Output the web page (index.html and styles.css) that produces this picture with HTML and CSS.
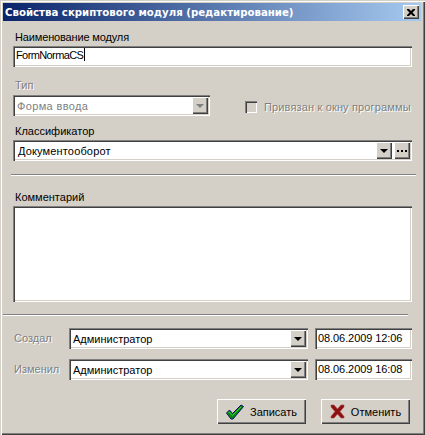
FILE: index.html
```html
<!DOCTYPE html>
<html lang="ru">
<head>
    <meta charset="UTF-8">
    <link rel="stylesheet" href="styles.css">
    <title>Свойства скриптового модуля</title>
</head>
<body>
    <div class="window">
        <div class="titlebar">
            <span class="title">Свойства скриптового модуля (редактирование)</span>
            <div class="close raised">
                <svg width="8" height="7" viewBox="0 0 8 7"><path d="M0 0h2l2 2 2-2h2v1L5.500 3.500 8 6v1H6L4 5 2 7H0V6l2.500-2.500L0 1z" fill="#000"/></svg>
            </div>
        </div>

        <div class="label label-name">Наименование модуля</div>
        <div class="field field-name">FormNormaCS<span class="caret"></span></div>

        <div class="label label-type disabled">Тип</div>
        <div class="type-row">
            <div class="field combo combo-type">
                <span class="value">Форма ввода</span>
                <div class="arrow raised"><i class="tri tri-off"></i></div>
            </div>
            <div class="bind">
                <span class="check"></span>
                <span class="bind-text disabled">Привязан к окну программы</span>
            </div>
        </div>

        <div class="label label-class">Классификатор</div>
        <div class="field combo combo-class">
            <span class="value">Документооборот</span>
            <div class="arrow raised"><i class="tri"></i></div>
            <div class="arrow dots raised"><i></i><i></i><i></i></div>
        </div>

        <div class="sep sep-top"></div>

        <div class="label label-comment">Комментарий</div>
        <div class="field memo"></div>

        <div class="sep sep-bottom"></div>

        <div class="user-row user-row-first">
            <span class="user-label disabled">Создал</span>
            <div class="field combo combo-user">
                <span class="value">Администратор</span>
                <div class="arrow raised"><i class="tri"></i></div>
            </div>
            <div class="field date">08.06.2009 12:06</div>
        </div>
        <div class="user-row">
            <span class="user-label disabled">Изменил</span>
            <div class="field combo combo-user">
                <span class="value">Администратор</span>
                <div class="arrow raised"><i class="tri"></i></div>
            </div>
            <div class="field date">08.06.2009 16:08</div>
        </div>

        <div class="buttons">
            <div class="btn raised">
                <svg width="18" height="16" viewBox="0 0 18 16"><path d="M0.500 9l3-3 3 3.500L15 1l2.500 1.500L7 15H5z" fill="#0a8a0a" stroke="#10106a" stroke-width="1"/><path d="M2.500 9l1-1 3 3.500L15 3" fill="none" stroke="#30d030" stroke-width="1"/></svg>
                <span>Записать</span>
            </div>
            <div class="btn btn-cancel raised">
                <svg width="15" height="15" viewBox="0 0 15 15"><path d="M1 1h3l3.500 4L11 1h3v2l-4 4.500 4 5V14h-3l-3.500-4L4 14H1v-1.500l4-5-4-4.500z" fill="#8c1010" stroke="#b04040" stroke-width="0.600"/></svg>
                <span>Отменить</span>
            </div>
        </div>
    </div>
</body>
</html>
```

FILE: styles.css
```css
html, body {
    margin: 0;
    padding: 0;
    background-color: #d4d0c8;
}

body {
    width: 426px;
    height: 435px;
    overflow: hidden;
    font-family: "Liberation Sans", Arial, sans-serif;
    font-size: 11px;
    color: #000;
}

.window {
    width: 425px;
    height: 435px;
    box-sizing: border-box;
    padding: 3px;
    background-color: #d4d0c8;
    box-shadow: inset 1px 1px 0 #d4d0c8, inset 2px 2px 0 #fff, inset -1px -1px 0 #404040, inset -2px -2px 0 #808080;
}

.titlebar {
    height: 18px;
    width: 418px;
    display: flex;
    align-items: center;
    justify-content: space-between;
    padding: 0 2px;
    box-sizing: border-box;
    background: linear-gradient(to right, #0a246a, #a6caf0);
}

.title {
    color: #fff;
    font-family: "DejaVu Sans", Verdana, sans-serif;
    font-weight: bold;
    font-size: 10.2px;
    white-space: nowrap;
}

.raised {
    box-sizing: border-box;
    background-color: #d4d0c8;
    box-shadow: inset 1px 1px 0 #fff, inset -1px -1px 0 #404040, inset -2px -2px 0 #808080;
}

.close {
    width: 16px;
    height: 14px;
    display: flex;
    align-items: center;
    justify-content: center;
}

.label {
    height: 14px;
    line-height: 14px;
    margin-left: 12px;
    white-space: nowrap;
}

.label-name {
    margin-top: 9px;
    letter-spacing: -0.15px;
}

.label-type { margin-top: 11px; }
.label-class { margin-top: 8px; }
.label-comment { margin-top: 14px; }

.disabled {
    color: #808080;
    text-shadow: 1px 1px 0 #fff;
}

.field {
    box-sizing: border-box;
    height: 21px;
    width: 399px;
    margin-left: 10px;
    margin-top: 2px;
    padding: 2px 2px 2px 4px;
    line-height: 15px;
    background-color: #fff;
    white-space: nowrap;
    box-shadow: inset 1px 1px 0 #808080, inset 2px 2px 0 #404040, inset -1px -1px 0 #fff, inset -2px -2px 0 #d4d0c8;
}

.field-name {
    padding-left: 3px;
    letter-spacing: -0.6px;
}

.caret {
    display: inline-block;
    width: 1px;
    height: 13px;
    margin-left: 1px;
    vertical-align: -2px;
    background-color: #000;
}

.combo {
    display: flex;
    align-items: stretch;
    gap: 2px;
}

.value {
    flex: 1;
    padding-top: 2px;
}

.arrow {
    width: 16px;
    display: flex;
    align-items: center;
    justify-content: center;
}

.tri {
    width: 0;
    height: 0;
    border-left: 4px solid transparent;
    border-right: 4px solid transparent;
    border-top: 4px solid #000;
}

.tri-off {
    border-top-color: #808080;
}

.dots {
    gap: 2px;
}

.dots i {
    width: 2px;
    height: 2px;
    background-color: #000;
}

.type-row {
    display: flex;
    align-items: center;
    margin-top: 3px;
}

.combo-type {
    width: 197px;
    margin-top: 0;
    color: #808080;
    letter-spacing: 0.35px;
}

.combo-class {
    padding-left: 5px;
    letter-spacing: 0.15px;
}

.bind {
    display: flex;
    align-items: center;
    gap: 7px;
    margin-left: 35px;
    margin-top: 2px;
    white-space: nowrap;
}

.bind-text {
    letter-spacing: 0.15px;
}

.check {
    width: 12px;
    height: 12px;
    box-sizing: border-box;
    box-shadow: inset 1px 1px 0 #808080, inset 2px 2px 0 #404040, inset -1px -1px 0 #fff, inset -2px -2px 0 #d4d0c8;
}

.sep {
    height: 2px;
    background: linear-gradient(to bottom, #808080 50%, #fff 50%);
}

.sep-top {
    width: 405px;
    margin: 13px 0 0 8px;
}

.sep-bottom {
    width: 405px;
    margin: 12px 0 0 0;
}

.memo {
    height: 96px;
}

.user-row {
    display: flex;
    align-items: flex-start;
    margin-top: 10px;
}

.user-row-first {
    margin-top: 12px;
}

.user-label {
    width: 55px;
    margin-left: 11px;
    line-height: 21px;
}

.combo-user {
    width: 239px;
    margin: 0;
}

.date {
    width: 97px;
    margin: 0 0 0 7px;
    padding-left: 3px;
    padding-top: 3px;
    letter-spacing: -0.08px;
}

.buttons {
    display: flex;
    gap: 15px;
    margin: 19px 0 0 214px;
}

.btn {
    width: 89px;
    height: 25px;
    display: flex;
    align-items: center;
    justify-content: center;
    gap: 6px;
}
```
